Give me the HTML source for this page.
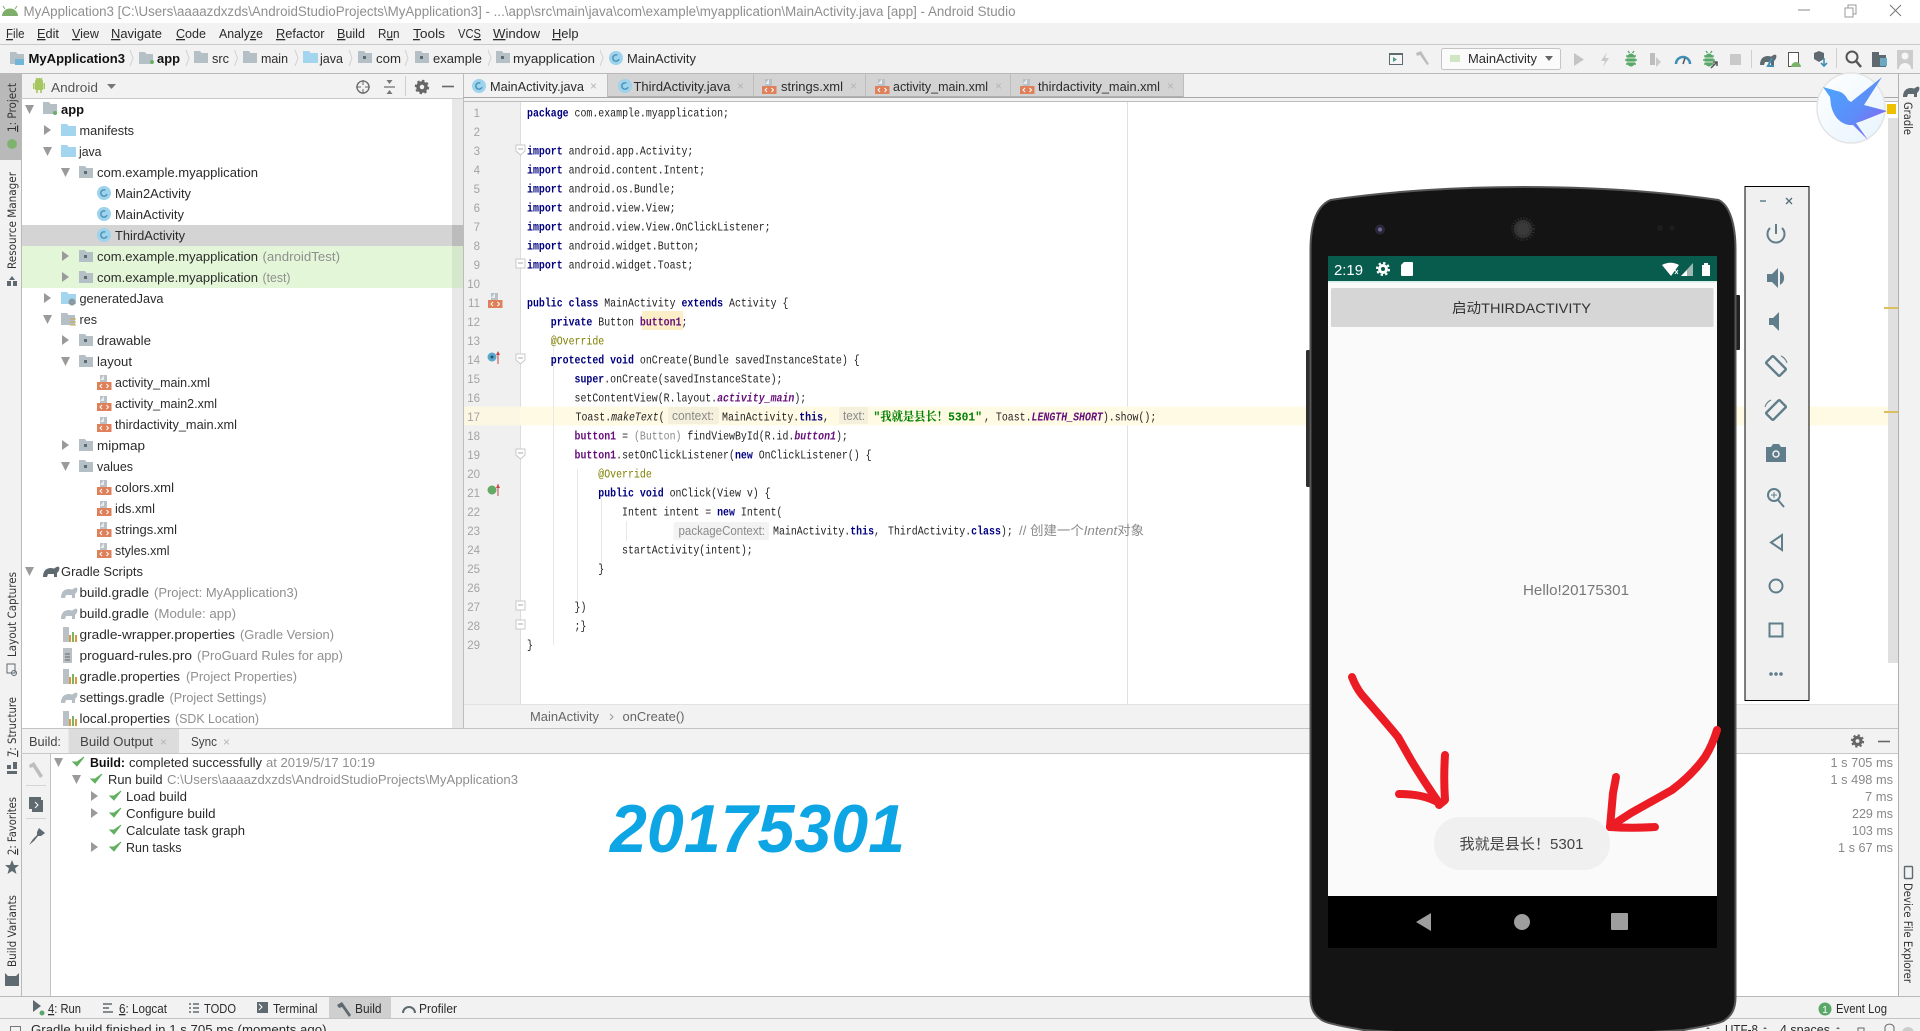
<!DOCTYPE html>
<html lang="en"><head><meta charset="utf-8"><title>Android Studio</title>
<style>
html,body{margin:0;padding:0;width:1920px;height:1031px;overflow:hidden;background:#fff}
svg{display:block}
text{font-family:"Liberation Sans","Noto Sans CJK SC",sans-serif;font-size:13px;fill:#2b2b2b;white-space:pre}
.g{fill:#8f8f8f}
.b{font-weight:bold;fill:#111}
.v{font-family:"DejaVu Sans",sans-serif;font-size:11.5px;fill:#333}
.c{font-family:"Liberation Mono","Noto Serif CJK SC",monospace;font-size:12px;fill:#222}
.k{font-weight:bold;fill:#000080}
.f{font-weight:bold;fill:#660e7a}
.fi{font-weight:bold;font-style:italic;fill:#660e7a}
.i{font-style:italic}
.a{fill:#808000}
.n{font-size:11.5px;fill:#a3a3a3;text-anchor:end}
.h{font-size:12.5px;fill:#8a8a8a}
.x{font-size:12px;fill:#b5b5b5}
.u{text-decoration:underline}
.t{font-size:12.5px;fill:#888;text-anchor:end}
</style></head><body>
<svg width="1920" height="1031" viewBox="0 0 1920 1031" xmlns="http://www.w3.org/2000/svg">
<defs>
<g id="fb"><path d="M0 1h6l1.5 2H15v10H0z" fill="#a3d5ee"/></g>
<g id="fg"><path d="M0 1h6l1.5 2H14v10H0z" fill="#b4c0c6"/></g>
<g id="fp"><path d="M0 1h6l1.5 2H14v10H0z" fill="#b4c0c6"/><rect x="5" y="6" width="3" height="3" fill="#5d6a70"/></g>
<g id="cl"><circle cx="7" cy="7" r="7" fill="#9dd3ec"/><circle cx="7" cy="7" r="3.2" fill="none" stroke="#4a8fb0" stroke-width="1.4" stroke-dasharray="15 5" transform="rotate(20 7 7)"/></g>
<g id="xm"><path d="M3 0h7v7H3z" fill="#b9c1c6"/><path d="M3 5l4-5v5z" fill="#e8ecee"/><rect x="0" y="7" width="14.5" height="8" fill="#e0805a"/><path d="M5 9l-2 2 2 2M9.5 9l2 2-2 2" fill="none" stroke="#fff" stroke-width="1"/></g>
<g id="el"><path d="M1 14c0-6 3-9 8-9 2 0 3 1 4 0 1-1 3-2 4-1 1 1 0 4-1 5l-1 1v4h-3v-3H6l-1 3z" fill="#5f6a70"/></g>
<g id="elg"><path d="M1 14c0-6 3-9 8-9 2 0 3 1 4 0 1-1 3-2 4-1 1 1 0 4-1 5l-1 1v4h-3v-3H6l-1 3z" fill="#b4bec4"/></g>
<g id="pr"><path d="M2 0h6v15H2z" fill="#b9c1c6"/><rect x="8" y="8" width="2" height="7" fill="#d99b3a"/><rect x="11" y="5" width="2" height="10" fill="#7ab26a"/><rect x="14" y="8" width="2" height="7" fill="#d99b3a"/></g>
<path id="ck" d="M0 5l4 4 7-9-7 5z" fill="#60b060" stroke="#60b060" stroke-width="1"/>
<path id="ad" d="M0 0h9L4.5 9z" fill="#9a9a9a"/>
<path id="ar" d="M0 0v10l7-5z" fill="#9a9a9a"/>
<g id="bug"><path d="M-5 -3h10M-6 1h12M-5 5h10M-3 -8l1.500 2M3 -8l-1.500 2" stroke="#59a869" stroke-width="1.400"/><ellipse cx="0" cy="1" rx="4.500" ry="6.500" fill="#59a869"/><path d="M-4 -1h8M-4 3h8" stroke="#fff" stroke-width=".8"/></g>
<linearGradient id="bg" x1="0" y1="0" x2="1" y2="1"><stop offset="0" stop-color="#fff"/><stop offset="1" stop-color="#e6f4fd"/></linearGradient>
<linearGradient id="bd" x1="0" y1="0" x2="1" y2="1"><stop offset="0" stop-color="#4aa8ff"/><stop offset=".55" stop-color="#5d8df8"/><stop offset="1" stop-color="#9a55ec"/></linearGradient>
</defs>

<!-- title bar -->
<rect width="1920" height="1031" fill="#f2f2f2"/>
<rect width="1920" height="23" fill="#fff"/>
<path d="M2 16a8 7.500 0 0 1 16 0z" fill="#7fae6a"/><path d="M5 9l-2-3M15 9l2-3" stroke="#7fae6a" stroke-width="1"/>
<text class="g" x="23.5" y="16" textLength="992" lengthAdjust="spacingAndGlyphs" style="font-size:13.5px">MyApplication3 [C:\Users\aaaazdxzds\AndroidStudioProjects\MyApplication3] - ...\app\src\main\java\com\example\myapplication\MainActivity.java [app] - Android Studio</text>
<path d="M1798 10h12" stroke="#8a8a8a"/><path d="M1845 8h8v9h-8zM1848 8V5h8v9h-3" fill="none" stroke="#9a9a9a"/><path d="M1890 5l11 11M1901 5l-11 11" stroke="#777" stroke-width="1"/>

<!-- menu -->
<g transform="translate(0,-1)">
<text x="6" y="39" textLength="18.5" lengthAdjust="spacingAndGlyphs"><tspan class="u">F</tspan>ile</text>
<text x="37" y="39" textLength="22" lengthAdjust="spacingAndGlyphs"><tspan class="u">E</tspan>dit</text>
<text x="72" y="39" textLength="27" lengthAdjust="spacingAndGlyphs"><tspan class="u">V</tspan>iew</text>
<text x="111" y="39" textLength="51" lengthAdjust="spacingAndGlyphs"><tspan class="u">N</tspan>avigate</text>
<text x="176" y="39" textLength="30" lengthAdjust="spacingAndGlyphs"><tspan class="u">C</tspan>ode</text>
<text x="219" y="39" textLength="44" lengthAdjust="spacingAndGlyphs">Analy<tspan class="u">z</tspan>e</text>
<text x="276" y="39" textLength="48.5" lengthAdjust="spacingAndGlyphs"><tspan class="u">R</tspan>efactor</text>
<text x="337" y="39" textLength="28" lengthAdjust="spacingAndGlyphs"><tspan class="u">B</tspan>uild</text>
<text x="378" y="39" textLength="21.5" lengthAdjust="spacingAndGlyphs">R<tspan class="u">u</tspan>n</text>
<text x="413" y="39" textLength="32" lengthAdjust="spacingAndGlyphs"><tspan class="u">T</tspan>ools</text>
<text x="458" y="39" textLength="23" lengthAdjust="spacingAndGlyphs">VC<tspan class="u">S</tspan></text>
<text x="493" y="39" textLength="47" lengthAdjust="spacingAndGlyphs"><tspan class="u">W</tspan>indow</text>
<text x="552" y="39" textLength="26.5" lengthAdjust="spacingAndGlyphs"><tspan class="u">H</tspan>elp</text>
</g>
<path d="M0 44.5h1920" stroke="#c9c9c9"/>

<!-- nav bar -->
<g transform="translate(0,-1)">
<use href="#fg" x="10" y="52"/><rect x="15" y="60" width="9" height="6" fill="#6fb6d8"/>
<text class="b" x="28.5" y="64" textLength="96.5" lengthAdjust="spacingAndGlyphs">MyApplication3</text>
<use href="#fg" x="139" y="52"/><circle cx="152" cy="63" r="2" fill="#6aaf6a"/>
<text class="b" x="157" y="64" textLength="23" lengthAdjust="spacingAndGlyphs">app</text>
<use href="#fg" x="194" y="51"/><text x="212" y="64" textLength="17" lengthAdjust="spacingAndGlyphs">src</text>
<use href="#fg" x="243" y="51"/><text x="261" y="64" textLength="27" lengthAdjust="spacingAndGlyphs">main</text>
<use href="#fb" x="303" y="51"/><text x="320" y="64" textLength="23" lengthAdjust="spacingAndGlyphs">java</text>
<use href="#fp" x="358" y="51"/><text x="376" y="64" textLength="25" lengthAdjust="spacingAndGlyphs">com</text>
<use href="#fp" x="415" y="51"/><text x="433" y="64" textLength="49" lengthAdjust="spacingAndGlyphs">example</text>
<use href="#fp" x="496" y="51"/><text x="513" y="64" textLength="82" lengthAdjust="spacingAndGlyphs">myapplication</text>
<use href="#cl" x="609" y="52"/><text x="627" y="64" textLength="69" lengthAdjust="spacingAndGlyphs">MainActivity</text>
<path d="M130 51l3 8-3 8M186 51l3 8-3 8M234.5 51l3 8-3 8M295 51l3 8-3 8M349 51l3 8-3 8M405 51l3 8-3 8M488 51l3 8-3 8M600 51l3 8-3 8" fill="none" stroke="#d0d0d0"/>
</g>

<!-- right toolbar -->
<rect x="1389.5" y="53.5" width="13" height="11" fill="#f6f6f6" stroke="#5d6a70"/><path d="M1393 57v5l4-2.5z" fill="#4f9a8f"/><rect x="1390" y="53" width="13" height="2" fill="#5d6a70"/>
<path d="M1416 53l5-2 8 13-2 1-7-10-3 1z" fill="#bdbdbd"/>
<rect x="1441.5" y="48.5" width="119" height="21" rx="2" fill="#fbfbfb" stroke="#c4c4c4"/>
<rect x="1450" y="55" width="10" height="7" fill="#cfe6c4"/>
<text x="1468" y="63" textLength="69" lengthAdjust="spacingAndGlyphs">MainActivity</text>
<path d="M1545 56h8l-4 5z" fill="#666"/>
<path d="M1574 53v13l10-6.5z" fill="#c4c4c4"/><path d="M1607 52l-6 9h4l-2 6 6-9h-4z" fill="#c9c9c9"/>
<use href="#bug" x="1631" y="59"/>
<path d="M1650 53h5v12h-5z" fill="#bdbdbd"/><path d="M1656 57v10l5-5z" fill="#c9c9c9"/>
<path d="M1676 64a7 7 0 0 1 14 0" fill="none" stroke="#3d8fb5" stroke-width="2.5"/><path d="M1683 64l2-6" stroke="#555" stroke-width="1.5"/>
<use href="#bug" x="1709" y="59"/><path d="M1711 68l6-6m-4 0h4v4" fill="none" stroke="#555" stroke-width="1.5"/>
<rect x="1730" y="54" width="11" height="11" fill="#c9c9c9"/><path d="M1751.5 50v18" stroke="#cfcfcf"/>
<use href="#el" x="1759" y="51"/><path d="M1772 58l-4 8h6" fill="none" stroke="#3d8fb5" stroke-width="2"/>
<rect x="1788.5" y="52.5" width="10" height="14" fill="#fff" stroke="#555"/><path d="M1791 67a5 5 0 0 1 10 0z" fill="#7ab26a"/>
<path d="M1814 53l5-2 5 2v6l-5 3-5-3z" fill="#5f6a70"/><path d="M1824 58v8m-3-3l3 3 3-3" fill="none" stroke="#3d8fb5" stroke-width="1.6"/>
<path d="M1836.5 48v20" stroke="#cfcfcf"/>
<circle cx="1852" cy="57" r="5.5" fill="none" stroke="#555" stroke-width="2"/><path d="M1856 61l5 6" stroke="#555" stroke-width="2.5"/>
<path d="M1872 52h7v3h7v12h-14z" fill="#5f6a70"/><rect x="1880" y="58" width="7" height="8" fill="#6aa8c4"/>
<rect x="1897" y="50" width="16" height="19" fill="#ccc"/><circle cx="1905" cy="56" r="3.5" fill="#f6f6f6"/><path d="M1899 69a6 6 0 0 1 12 0z" fill="#f6f6f6"/>
<path d="M0 73.5h1920" stroke="#b9b9b9"/>

<!-- left strip -->
<rect x="0" y="74" width="21" height="86" fill="#b9b9b9"/>
<path d="M21.5 74v923" stroke="#b9b9b9"/>
<text class="v" transform="translate(16,132) rotate(-90)" textLength="49" lengthAdjust="spacingAndGlyphs"><tspan class="u">1</tspan>: Project</text>
<circle cx="12" cy="144" r="5" fill="#7fb26f"/>
<text class="v" transform="translate(16,269) rotate(-90)" textLength="97" lengthAdjust="spacingAndGlyphs">Resource Manager</text>
<path d="M12 276l3 4H9zM7 281h4v5H7zM13 281h4v5h-4z" fill="#5f6a70"/>
<text class="v" transform="translate(16,657) rotate(-90)" textLength="85" lengthAdjust="spacingAndGlyphs">Layout Captures</text>
<rect x="7" y="664" width="8" height="9" fill="none" stroke="#5f6a70"/><circle cx="14" cy="673" r="2.5" fill="none" stroke="#5f6a70"/>
<text class="v" transform="translate(16,757) rotate(-90)" textLength="60" lengthAdjust="spacingAndGlyphs"><tspan class="u">7</tspan>: Structure</text>
<path d="M7 765h4v4H7zM13 762h4v7h-4zM7 771h10v3H7z" fill="#5f6a70"/>
<text class="v" transform="translate(16,855) rotate(-90)" textLength="58" lengthAdjust="spacingAndGlyphs"><tspan class="u">2</tspan>: Favorites</text>
<path d="M12 860l2 5h5l-4 3.5 1.5 5.5-4.5-3-4.5 3 1.5-5.5-4-3.5h5z" fill="#5f6a70"/>
<text class="v" transform="translate(16,967) rotate(-90)" textLength="72" lengthAdjust="spacingAndGlyphs">Build Variants</text>
<path d="M5 973l3 3h8l3-3v13H5z" fill="#5f6a70"/>

<!-- project header -->
<path d="M35 82a4 4 0 0 1 8 0v8h-8z" fill="#a6c660"/><rect x="33" y="83" width="1.5" height="6" fill="#a6c660"/><rect x="43.5" y="83" width="1.5" height="6" fill="#a6c660"/><path d="M37 90v3M41 90v3" stroke="#a6c660" stroke-width="1.6"/><path d="M36 78l1 2M42 78l-1 2" stroke="#a6c660"/>
<text x="51" y="92" textLength="47" lengthAdjust="spacingAndGlyphs" style="fill:#555">Android</text>
<path d="M107 84h9l-4.5 5z" fill="#777"/>
<circle cx="363" cy="87" r="6" fill="none" stroke="#666" stroke-width="1.3"/><path d="M363 80v14M356 87h14" stroke="#666"/><circle cx="363" cy="87" r="2" fill="#f2f2f2"/>
<path d="M384 87h11" stroke="#777" stroke-width="1.3"/><path d="M389.5 84l-3-4h6zM389.5 90l-3 4h6z" fill="#777"/>
<path d="M405.5 76v20" stroke="#cfcfcf"/>
<circle cx="422" cy="87" r="4" fill="none" stroke="#666" stroke-width="3.5"/><circle cx="422" cy="87" r="6.3" fill="none" stroke="#666" stroke-width="1.8" stroke-dasharray="2.5 2.4"/>
<path d="M442 86.5h12" stroke="#666" stroke-width="1.6"/>
<path d="M21 98.5h442" stroke="#c9c9c9"/>

<!-- tree -->
<rect x="22" y="99" width="441" height="629" fill="#fff"/>
<rect x="452" y="99" width="11" height="629" fill="#e8e8e8"/>
<rect x="22" y="225" width="430" height="21" fill="#d4d4d4"/><rect x="452" y="225" width="11" height="21" fill="#bcbcbc"/>
<rect x="22" y="246" width="430" height="42" fill="#e4f6d8"/><rect x="452" y="246" width="11" height="42" fill="#d6e8cb"/>
<g transform="translate(0,-1)">
<use href="#ad" x="25" y="106"/><use href="#fg" x="43" y="102"/><circle cx="55" cy="114" r="2" fill="#6aaf6a"/><text class="b" x="61" y="115" textLength="23" lengthAdjust="spacingAndGlyphs">app</text>
<use href="#ar" x="44" y="126"/><use href="#fb" x="61" y="124"/><text x="79.5" y="136" textLength="54.5" lengthAdjust="spacingAndGlyphs">manifests</text>
<use href="#ad" x="43" y="148"/><use href="#fb" x="61" y="145"/><text x="79" y="157" textLength="22.5" lengthAdjust="spacingAndGlyphs">java</text>
<use href="#ad" x="61" y="169"/><use href="#fp" x="79" y="166"/><text x="97" y="178" textLength="161" lengthAdjust="spacingAndGlyphs">com.example.myapplication</text>
<use href="#cl" x="97" y="187"/><text x="115" y="199" textLength="76" lengthAdjust="spacingAndGlyphs">Main2Activity</text>
<use href="#cl" x="97" y="208"/><text x="115" y="220" textLength="69" lengthAdjust="spacingAndGlyphs">MainActivity</text>
<use href="#cl" x="97" y="229"/><text x="115" y="241" textLength="70" lengthAdjust="spacingAndGlyphs">ThirdActivity</text>
<use href="#ar" x="62" y="252"/><use href="#fp" x="79" y="250"/><text x="97" y="262" textLength="161" lengthAdjust="spacingAndGlyphs">com.example.myapplication</text><text class="g" x="262.5" y="262" textLength="77.5" lengthAdjust="spacingAndGlyphs">(androidTest)</text>
<use href="#ar" x="62" y="273"/><use href="#fp" x="79" y="271"/><text x="97" y="283" textLength="161" lengthAdjust="spacingAndGlyphs">com.example.myapplication</text><text class="g" x="262.5" y="283" textLength="28" lengthAdjust="spacingAndGlyphs">(test)</text>
<use href="#ar" x="44" y="294"/><use href="#fb" x="61" y="292"/><circle cx="72" cy="303" r="3.5" fill="#8a9aa0"/><text x="79.5" y="304" textLength="84" lengthAdjust="spacingAndGlyphs">generatedJava</text>
<use href="#ad" x="43" y="316"/><use href="#fg" x="61" y="313"/><path d="M70 320h6M70 323h6M70 326h6" stroke="#c7a84a"/><text x="79.5" y="325" textLength="17.5" lengthAdjust="spacingAndGlyphs">res</text>
<use href="#ar" x="62" y="336"/><use href="#fp" x="79" y="334"/><text x="97" y="346" textLength="54" lengthAdjust="spacingAndGlyphs">drawable</text>
<use href="#ad" x="61" y="358"/><use href="#fp" x="79" y="355"/><text x="97" y="367" textLength="35" lengthAdjust="spacingAndGlyphs">layout</text>
<use href="#xm" x="97" y="376"/><text x="115" y="388" textLength="95" lengthAdjust="spacingAndGlyphs">activity_main.xml</text>
<use href="#xm" x="97" y="397"/><text x="115" y="409" textLength="102" lengthAdjust="spacingAndGlyphs">activity_main2.xml</text>
<use href="#xm" x="97" y="418"/><text x="115" y="430" textLength="122" lengthAdjust="spacingAndGlyphs">thirdactivity_main.xml</text>
<use href="#ar" x="62" y="441"/><use href="#fp" x="79" y="439"/><text x="97" y="451" textLength="48" lengthAdjust="spacingAndGlyphs">mipmap</text>
<use href="#ad" x="61" y="463"/><use href="#fp" x="79" y="460"/><text x="97" y="472" textLength="36" lengthAdjust="spacingAndGlyphs">values</text>
<use href="#xm" x="97" y="481"/><text x="115" y="493" textLength="59" lengthAdjust="spacingAndGlyphs">colors.xml</text>
<use href="#xm" x="97" y="502"/><text x="115" y="514" textLength="40" lengthAdjust="spacingAndGlyphs">ids.xml</text>
<use href="#xm" x="97" y="523"/><text x="115" y="535" textLength="62" lengthAdjust="spacingAndGlyphs">strings.xml</text>
<use href="#xm" x="97" y="544"/><text x="115" y="556" textLength="54.5" lengthAdjust="spacingAndGlyphs">styles.xml</text>
<use href="#ad" x="25" y="568"/><use href="#el" x="42" y="564"/><text x="61" y="577" textLength="82" lengthAdjust="spacingAndGlyphs">Gradle Scripts</text>
<use href="#elg" x="60" y="585"/><text x="79.5" y="598" textLength="69.5" lengthAdjust="spacingAndGlyphs">build.gradle</text><text class="g" x="154" y="598" textLength="144" lengthAdjust="spacingAndGlyphs">(Project: MyApplication3)</text>
<use href="#elg" x="60" y="606"/><text x="79.5" y="619" textLength="69.5" lengthAdjust="spacingAndGlyphs">build.gradle</text><text class="g" x="154" y="619" textLength="82" lengthAdjust="spacingAndGlyphs">(Module: app)</text>
<use href="#pr" x="61" y="628"/><text x="79.5" y="640" textLength="155.5" lengthAdjust="spacingAndGlyphs">gradle-wrapper.properties</text><text class="g" x="240" y="640" textLength="94" lengthAdjust="spacingAndGlyphs">(Gradle Version)</text>
<path d="M63 649h9v15h-9z" fill="#b9c1c6"/><path d="M65 655h5M65 658h5M65 661h5" stroke="#666"/><text x="79.5" y="661" textLength="112.5" lengthAdjust="spacingAndGlyphs">proguard-rules.pro</text><text class="g" x="197" y="661" textLength="146" lengthAdjust="spacingAndGlyphs">(ProGuard Rules for app)</text>
<use href="#pr" x="61" y="670"/><text x="79.5" y="682" textLength="100.5" lengthAdjust="spacingAndGlyphs">gradle.properties</text><text class="g" x="186" y="682" textLength="111" lengthAdjust="spacingAndGlyphs">(Project Properties)</text>
<use href="#elg" x="60" y="690"/><text x="79.5" y="703" textLength="85" lengthAdjust="spacingAndGlyphs">settings.gradle</text><text class="g" x="169.5" y="703" textLength="97" lengthAdjust="spacingAndGlyphs">(Project Settings)</text>
<use href="#pr" x="61" y="712"/><text x="79.5" y="724" textLength="90.5" lengthAdjust="spacingAndGlyphs">local.properties</text><text class="g" x="175" y="724" textLength="84" lengthAdjust="spacingAndGlyphs">(SDK Location)</text>
</g>

<!-- editor tabs -->
<rect x="463" y="74" width="1435" height="28" fill="#f2f2f2"/>
<rect x="608" y="74" width="575" height="23" fill="#d3d3d3"/>
<path d="M463.5 74v654M607.5 74v23M753.5 74v23M865.5 74v23M1010.5 74v23M1183.5 74v23" stroke="#bdbdbd"/>
<path d="M463 97.5H1898" stroke="#a8a8a8"/><path d="M608 96.5h575" stroke="#b0b0b0"/><path d="M463 101.500H1898" stroke="#bdbdbd"/>
<g transform="translate(0,-1)">
<use href="#cl" x="472" y="80"/><text x="490" y="92" textLength="94" lengthAdjust="spacingAndGlyphs">MainActivity.java</text><text class="x" x="590" y="91">×</text>
<use href="#cl" x="618" y="80"/><text x="633.5" y="92" textLength="97" lengthAdjust="spacingAndGlyphs">ThirdActivity.java</text><text class="x" x="737" y="91">×</text>
<use href="#xm" x="762" y="80"/><text x="781" y="92" textLength="62" lengthAdjust="spacingAndGlyphs">strings.xml</text><text class="x" x="850" y="91">×</text>
<use href="#xm" x="875" y="80"/><text x="893" y="92" textLength="95" lengthAdjust="spacingAndGlyphs">activity_main.xml</text><text class="x" x="995" y="91">×</text>
<use href="#xm" x="1020" y="80"/><text x="1038" y="92" textLength="122" lengthAdjust="spacingAndGlyphs">thirdactivity_main.xml</text><text class="x" x="1167" y="91">×</text>
</g>

<!-- editor -->
<rect x="520" y="102" width="1378" height="602" fill="#fff"/>
<rect x="464" y="102" width="56" height="602" fill="#f0f0f0"/>
<path d="M1127.5 102v602" stroke="#e0e0e0"/><path d="M520.5 102v602" stroke="#dcdcdc"/>
<rect x="464" y="406.500" width="56" height="19" fill="#fbf7e2"/><rect x="520" y="406.500" width="1378" height="19" fill="#fffae3"/>
<rect x="1888" y="118" width="10" height="545" fill="#e0e0e0"/>
<rect x="1887" y="104" width="9" height="10" fill="#eec100"/><rect x="1884" y="307" width="14" height="2" fill="#dcc060"/><rect x="1884" y="411" width="14" height="2" fill="#dcc060"/>
<g transform="translate(0,-1)">
<rect x="642" y="312" width="41" height="19" fill="#fcefc8"/>
<path d="M553.5 336v310M577.5 470v135M601.5 500v70M626.5 522v20" stroke="#e8e8e8"/>
<text class="n" x="480" y="118">1</text><text class="n" x="480" y="137">2</text><text class="n" x="480" y="156">3</text><text class="n" x="480" y="175">4</text><text class="n" x="480" y="194">5</text><text class="n" x="480" y="213">6</text><text class="n" x="480" y="232">7</text><text class="n" x="480" y="251">8</text><text class="n" x="480" y="270">9</text><text class="n" x="480" y="289">10</text><text class="n" x="480" y="308">11</text><text class="n" x="480" y="327">12</text><text class="n" x="480" y="346">13</text><text class="n" x="480" y="365">14</text><text class="n" x="480" y="384">15</text><text class="n" x="480" y="403">16</text><text class="n" x="480" y="422">17</text><text class="n" x="480" y="441">18</text><text class="n" x="480" y="460">19</text><text class="n" x="480" y="479">20</text><text class="n" x="480" y="498">21</text><text class="n" x="480" y="517">22</text><text class="n" x="480" y="536">23</text><text class="n" x="480" y="555">24</text><text class="n" x="480" y="574">25</text><text class="n" x="480" y="593">26</text><text class="n" x="480" y="612">27</text><text class="n" x="480" y="631">28</text><text class="n" x="480" y="650">29</text>
<g fill="#fff" stroke="#c8c8c8"><path d="M516 146h9v6l-4.5 4-4.5-4z"/><path d="M516 260h9v9h-9z"/><path d="M516 355h9v6l-4.5 4-4.5-4z"/><path d="M516 450h9v6l-4.5 4-4.5-4z"/><path d="M516 602h9v9h-9z"/><path d="M516 621h9v9h-9z"/></g>
<path d="M518 264h5M518 606h5M518 625h5M518 150h5M518 359h5M518 454h5" stroke="#aaa"/>
<use href="#xm" x="488" y="294"/>
<circle cx="492" cy="358" r="4.5" fill="#5aa7cc"/><circle cx="492" cy="358" r="1.5" fill="#24536a"/><path d="M498 365v-12" stroke="#c44"/><path d="M496 356l2-4 2 4z" fill="#c44"/>
<circle cx="492" cy="491" r="4.5" fill="#64a964"/><path d="M498 497v-12" stroke="#c44"/><path d="M496 489l2-4 2 4z" fill="#c44"/>

<text class="c" transform="translate(527,117.5) scale(.825,1)"><tspan class="k">package</tspan> com.example.myapplication;</text>
<text class="c" transform="translate(527,155.5) scale(.825,1)"><tspan class="k">import</tspan> android.app.Activity;</text>
<text class="c" transform="translate(527,174.5) scale(.825,1)"><tspan class="k">import</tspan> android.content.Intent;</text>
<text class="c" transform="translate(527,193.5) scale(.825,1)"><tspan class="k">import</tspan> android.os.Bundle;</text>
<text class="c" transform="translate(527,212.5) scale(.825,1)"><tspan class="k">import</tspan> android.view.View;</text>
<text class="c" transform="translate(527,231.5) scale(.825,1)"><tspan class="k">import</tspan> android.view.View.OnClickListener;</text>
<text class="c" transform="translate(527,250.5) scale(.825,1)"><tspan class="k">import</tspan> android.widget.Button;</text>
<text class="c" transform="translate(527,269.5) scale(.825,1)"><tspan class="k">import</tspan> android.widget.Toast;</text>
<text class="c" transform="translate(527,307.5) scale(.825,1)"><tspan class="k">public class</tspan> MainActivity <tspan class="k">extends</tspan> Activity {</text>
<text class="c" transform="translate(527,326.5) scale(.825,1)">    <tspan class="k">private</tspan> Button <tspan class="f">button1</tspan>;</text>
<text class="c a" transform="translate(527,345.5) scale(.825,1)" style="fill:#808000">    @Override</text>
<text class="c" transform="translate(527,364.5) scale(.825,1)">    <tspan class="k">protected void</tspan> onCreate(Bundle savedInstanceState) {</text>
<text class="c" transform="translate(527,383.5) scale(.825,1)">        <tspan class="k">super</tspan>.onCreate(savedInstanceState);</text>
<text class="c" transform="translate(527,402.5) scale(.825,1)">        setContentView(R.layout.<tspan class="fi">activity_main</tspan>);</text>
<text class="c" transform="translate(575.5,421.5) scale(.825,1)">Toast.<tspan class="i">makeText</tspan>(</text>
<rect x="668" y="408" width="51" height="17" rx="2" fill="#f4f0dc"/><text class="h" x="672" y="421" textLength="42" lengthAdjust="spacingAndGlyphs">context:</text>
<text class="c" transform="translate(722,421.5) scale(.825,1)">MainActivity.<tspan class="k">this</tspan>,</text>
<rect x="839" y="408" width="29" height="17" rx="2" fill="#f4f0dc"/><text class="h" x="843" y="421" textLength="22" lengthAdjust="spacingAndGlyphs">text:</text>
<text class="c" x="873.5" y="421.5" textLength="108.5" lengthAdjust="spacingAndGlyphs" style="font-weight:bold;fill:#008000">"我就是县长！5301"</text>
<text class="c" transform="translate(984,421.5) scale(.825,1)">, Toast.<tspan class="fi">LENGTH_SHORT</tspan>).show();</text>
<text class="c" transform="translate(527,440.5) scale(.825,1)">        <tspan class="f">button1</tspan> = <tspan fill="#8a8a8a">(Button)</tspan> findViewById(R.id.<tspan class="fi">button1</tspan>);</text>
<text class="c" transform="translate(527,459.5) scale(.825,1)">        <tspan class="f">button1</tspan>.setOnClickListener(<tspan class="k">new</tspan> OnClickListener() {</text>
<text class="c" transform="translate(527,478.5) scale(.825,1)" style="fill:#808000">            @Override</text>
<text class="c" transform="translate(527,497.5) scale(.825,1)">            <tspan class="k">public void</tspan> onClick(View v) {</text>
<text class="c" transform="translate(527,516.5) scale(.825,1)">                Intent intent = <tspan class="k">new</tspan> Intent(</text>
<rect x="673.5" y="523" width="95.5" height="18" rx="2" fill="#f3f3f3"/><text class="h" x="678.5" y="536" textLength="86.5" lengthAdjust="spacingAndGlyphs">packageContext:</text>
<text class="c" transform="translate(773,535.5) scale(.825,1)">MainActivity.<tspan class="k">this</tspan>,</text>
<text class="c" transform="translate(888,535.5) scale(.825,1)">ThirdActivity.<tspan class="k">class</tspan>);</text>
<text x="1019" y="536" style="fill:#8a8a8a;font-size:13px" textLength="125" lengthAdjust="spacingAndGlyphs">// 创建一个<tspan font-style="italic">Intent</tspan>对象</text>
<text class="c" transform="translate(527,554.5) scale(.825,1)">                startActivity(intent);</text>
<text class="c" transform="translate(527,573.5) scale(.825,1)">            }</text>
<text class="c" transform="translate(527,611.5) scale(.825,1)">        })</text>
<text class="c" transform="translate(527,630.5) scale(.825,1)">        ;}</text>
<text class="c" transform="translate(527,649.5) scale(.825,1)">}</text>
</g>

<!-- breadcrumb -->
<rect x="464" y="704" width="1434" height="24" fill="#f2f2f2"/><path d="M464 704.5h1434" stroke="#e2e2e2"/>
<text x="530" y="721" textLength="69" lengthAdjust="spacingAndGlyphs" style="fill:#666">MainActivity</text>
<path d="M610 714l3 3-3 3" fill="none" stroke="#999"/>
<text x="622.5" y="721" textLength="62" lengthAdjust="spacingAndGlyphs" style="fill:#666">onCreate()</text>
<path d="M21 728.5h1877" stroke="#c4c4c4"/>

<!-- build panel -->
<rect x="68.5" y="729" width="110.5" height="24" fill="#dcdcdc"/>
<text x="29" y="746" textLength="32" lengthAdjust="spacingAndGlyphs" style="fill:#444">Build:</text>
<text x="80" y="746" textLength="73" lengthAdjust="spacingAndGlyphs" style="fill:#444">Build Output</text><text class="x" x="160" y="746">×</text>
<text x="191" y="746" textLength="26" lengthAdjust="spacingAndGlyphs" style="fill:#444">Sync</text><text class="x" x="223" y="746">×</text>
<circle cx="1857.5" cy="741" r="3.5" fill="none" stroke="#666" stroke-width="3.2"/><circle cx="1857.5" cy="741" r="5.8" fill="none" stroke="#666" stroke-width="1.7" stroke-dasharray="2.3 2.25"/>
<path d="M1878 741.5h12" stroke="#666" stroke-width="1.6"/>
<path d="M21 753.5h1877" stroke="#c8c8c8"/>
<rect x="51" y="754" width="1847" height="242" fill="#fff"/>
<rect x="22" y="754" width="28" height="242" fill="#f2f2f2"/>
<path d="M50.5 754v242" stroke="#c4c4c4"/><path d="M26 785.5h20M26 818.5h20" stroke="#d4d4d4"/>
<path d="M29 765l5-3 9 14-3 2-7-11-3 1z" fill="#bdbdbd"/>
<path d="M29 797h12v3h2v12H32v-3h-3z" fill="#5f6a70"/><path d="M35 802l3 3-3 3" fill="none" stroke="#fff"/>
<path d="M39 828l6 5-4 3-3 0-4 5-5 4 4-6 4-4 0-3z" fill="#5f6a70"/>
<g transform="translate(0,-1)">
<use href="#ad" x="54" y="759"/><use href="#ck" x="73" y="758"/>
<text class="b" x="90" y="768" textLength="35" lengthAdjust="spacingAndGlyphs">Build:</text><text x="129" y="768" textLength="133" lengthAdjust="spacingAndGlyphs">completed successfully</text><text class="g" x="266" y="768" textLength="109" lengthAdjust="spacingAndGlyphs">at 2019/5/17 10:19</text>
<use href="#ad" x="72" y="776"/><use href="#ck" x="91" y="775"/>
<text x="108" y="785" textLength="54.5" lengthAdjust="spacingAndGlyphs">Run build</text><text class="g" x="167" y="785" textLength="351" lengthAdjust="spacingAndGlyphs">C:\Users\aaaazdxzds\AndroidStudioProjects\MyApplication3</text>
<use href="#ar" x="91" y="792"/><use href="#ck" x="110" y="792"/><text x="126" y="802" textLength="61" lengthAdjust="spacingAndGlyphs">Load build</text>
<use href="#ar" x="91" y="809"/><use href="#ck" x="110" y="809"/><text x="126" y="819" textLength="89.5" lengthAdjust="spacingAndGlyphs">Configure build</text>
<use href="#ck" x="110" y="826"/><text x="126" y="836" textLength="119" lengthAdjust="spacingAndGlyphs">Calculate task graph</text>
<use href="#ar" x="91" y="843"/><use href="#ck" x="110" y="843"/><text x="126" y="853" textLength="55.5" lengthAdjust="spacingAndGlyphs">Run tasks</text>
<text class="t" x="1893" y="768" textLength="62.5" lengthAdjust="spacingAndGlyphs">1 s 705 ms</text>
<text class="t" x="1893" y="785" textLength="62.5" lengthAdjust="spacingAndGlyphs">1 s 498 ms</text>
<text class="t" x="1893" y="802" textLength="28" lengthAdjust="spacingAndGlyphs">7 ms</text>
<text class="t" x="1893" y="819" textLength="41" lengthAdjust="spacingAndGlyphs">229 ms</text>
<text class="t" x="1893" y="836" textLength="41" lengthAdjust="spacingAndGlyphs">103 ms</text>
<text class="t" x="1893" y="853" textLength="55" lengthAdjust="spacingAndGlyphs">1 s 67 ms</text>
</g>
<text x="610" y="852" textLength="295" lengthAdjust="spacingAndGlyphs" style="font-size:68px;font-weight:bold;font-style:italic;fill:#0ea5e4">20175301</text>

<!-- bottom tools -->
<path d="M0 996.5h1898M1898 996.5h22" stroke="#b9b9b9"/><path d="M0 1018.5h1920" stroke="#c4c4c4"/>
<rect x="329" y="997" width="62" height="21" fill="#cfcfcf"/>
<path d="M33 1000v12l8-6z" fill="#5f6a70"/><circle cx="42" cy="1013" r="2.5" fill="#59a869"/>
<text x="48" y="1013" textLength="33" lengthAdjust="spacingAndGlyphs"><tspan class="u">4</tspan>: Run</text>
<path d="M103 1004h9M103 1008h6M103 1012h10" stroke="#5f6a70" stroke-width="1.4"/>
<text x="119" y="1013" textLength="48" lengthAdjust="spacingAndGlyphs"><tspan class="u">6</tspan>: Logcat</text>
<path d="M189 1004h2M193 1004h6M189 1008h2M193 1008h6M189 1012h2M193 1012h6" stroke="#5f6a70" stroke-width="1.4"/>
<text x="204" y="1013" textLength="32" lengthAdjust="spacingAndGlyphs">TODO</text>
<rect x="257" y="1002" width="11" height="11" fill="#5f6a70"/><path d="M259 1004l3 3-3 3" fill="none" stroke="#fff"/>
<text x="273" y="1013" textLength="44.5" lengthAdjust="spacingAndGlyphs">Terminal</text>
<path d="M337 1005l5-3 9 13-2 2-7-10-3 1z" fill="#5f6a70"/>
<text x="355" y="1013" textLength="26.5" lengthAdjust="spacingAndGlyphs">Build</text>
<path d="M403 1013a6 6 0 0 1 12 0" fill="none" stroke="#5f6a70" stroke-width="2"/>
<text x="419" y="1013" textLength="38" lengthAdjust="spacingAndGlyphs">Profiler</text>
<circle cx="1825" cy="1009" r="6.5" fill="#59a869"/><text x="1825" y="1013" text-anchor="middle" style="font-size:10px;fill:#fff">1</text>
<text x="1836" y="1013" textLength="51" lengthAdjust="spacingAndGlyphs">Event Log</text>
<rect x="10.5" y="1026.5" width="10" height="10" fill="none" stroke="#777"/>
<text x="31" y="1034" textLength="295.5" lengthAdjust="spacingAndGlyphs">Gradle build finished in 1 s 705 ms (moments ago)</text>
<text x="1725" y="1034" textLength="33" lengthAdjust="spacingAndGlyphs">UTF-8</text><text x="1780" y="1034" textLength="50" lengthAdjust="spacingAndGlyphs">4 spaces</text>
<path d="M1708 1027l2 2h-4zM1765 1027l2 2h-4zM1838 1027l2 2h-4z" fill="#666"/>
<path d="M1858 1028h6v6h-6zM1885 1027a5 5 0 0 1 9 0v7h-9z" fill="none" stroke="#666"/><circle cx="1908" cy="1033" r="6" fill="#ccc"/>

<!-- right strip -->
<path d="M1898.5 74v922" stroke="#b0b0b0"/>
<path d="M1899 74h21v922h-21z" fill="#f2f2f2"/>
<use href="#el" x="1902" y="83"/>
<text class="v" transform="translate(1904,102) rotate(90)" textLength="33" lengthAdjust="spacingAndGlyphs">Gradle</text>
<rect x="1904.5" y="866.5" width="8" height="12" rx="1" fill="none" stroke="#5f6a70" stroke-width="1.4"/>
<text class="v" transform="translate(1904,883) rotate(90)" textLength="100" lengthAdjust="spacingAndGlyphs">Device File Explorer</text>

<!-- bird -->
<ellipse cx="1851" cy="108" rx="34" ry="35" fill="url(#bg)" stroke="#e4e4e6" stroke-width="1.5"/>
<path d="M1823 87l14 4c6 1 9 5 11 9l3 2 31-25-18 28 23 6-25 10-6 2 12 17-15-15c-12 1-20-9-22-20l-1-8z" fill="url(#bd)"/>

<!-- phone side buttons -->
<rect x="1306" y="350" width="5" height="137" rx="1.5" fill="#2e2e2e"/>
<rect x="1735" y="295" width="5" height="55" rx="1" fill="#222"/>
<!-- phone -->
<path d="M1310.5 250c0-26 6-44 20-50 60-9 130-13 193-13s133 4 195 13c11 5 17 24 17 50v747c0 12-4 19-12 24-8 4-30 7-40 9-50 3-110 8-160 8s-110-5-160-8c-10-2-32-5-40-9-9-5-13-12-13-24z" fill="#141414" stroke="#555" stroke-width="2"/>
<circle cx="1380" cy="229.5" r="5" fill="#2a2838"/><circle cx="1380" cy="229.5" r="2" fill="#6c6898"/>
<circle cx="1523" cy="229" r="9" fill="#3a3a3a"/><circle cx="1523" cy="229" r="9" fill="none" stroke="#2a2a2a" stroke-width="6" stroke-dasharray="1 1.5"/>
<circle cx="1660" cy="228" r="3" fill="#1e1e1e"/><circle cx="1672" cy="228" r="2.5" fill="#1e1e1e"/>
<rect x="1328" y="256" width="389" height="640" fill="#fafafa"/>
<rect x="1328" y="256" width="389" height="25" fill="#075c4e"/><rect x="1328" y="281" width="389" height="1.5" fill="#d6ece6"/>
<text x="1334" y="275" textLength="29" lengthAdjust="spacingAndGlyphs" style="font-size:15px;fill:#fff">2:19</text>
<circle cx="1383" cy="269" r="3.5" fill="none" stroke="#fff" stroke-width="3"/><circle cx="1383" cy="269" r="6" fill="none" stroke="#fff" stroke-width="2" stroke-dasharray="2.4 2.3"/>
<path d="M1404 262h8a1 1 0 0 1 1 1v12a1 1 0 0 1-1 1h-10a1 1 0 0 1-1-1v-10z" fill="#fff"/>
<path d="M1662 265c5-3 12-3 17 0l-8 11z" fill="#fff"/><path d="M1675 270l3 4m0-4l-3 4" stroke="#fff" stroke-width="1"/>
<path d="M1693 263v13h-12z" fill="#9fb8b2"/><path d="M1687 270v6h-6z" fill="#fff"/>
<path d="M1702 265h2v-2h4v2h2v11h-8z" fill="#fff"/>
<rect x="1331" y="288" width="382.5" height="39" rx="1.5" fill="#d6d6d6"/>
<text x="1452" y="313" textLength="139" lengthAdjust="spacingAndGlyphs" style="font-size:14px;fill:#333">启动THIRDACTIVITY</text>
<text x="1523" y="595" textLength="106" lengthAdjust="spacingAndGlyphs" style="font-size:15px;fill:#777">Hello!20175301</text>
<rect x="1434" y="817" width="176" height="53" rx="26" fill="#f0f0f0"/>
<text x="1459.5" y="849" textLength="124" lengthAdjust="spacingAndGlyphs" style="font-size:15px;fill:#444">我就是县长！5301</text>
<rect x="1328" y="896" width="389" height="52" fill="#000"/>
<path d="M1431 913v18l-15-9z" fill="#9e9e9e"/><ellipse cx="1522" cy="922" rx="8" ry="8" fill="#9e9e9e"/><rect x="1611" y="913" width="17" height="17" rx="1" fill="#9e9e9e"/>

<!-- red arrows -->
<g fill="none" stroke="#ec1c24" stroke-width="8" stroke-linecap="round" stroke-linejoin="round">
<path d="M1352 677c3 8 6 13 10 18 14 16 26 30 36 42 5 9 9 16 13 23 9 15 19 30 28 43"/>
<path d="M1445 755c-1 15-1 30 0 45l-6 5"/>
<path d="M1399 794c15 0 28 2 40 9"/>
<path d="M1717 730c-3 10-7 19-12 27-10 14-21 24-33 33-14 8-27 15-41 23-8 5-14 9-21 14"/>
<path d="M1616 777c-1 6-2 11-3 16-1 12-2 23-3 34"/>
<path d="M1610 827c15 1 30 1 45 0"/>
</g>

<!-- emulator sidebar -->
<rect x="1745" y="186.5" width="64" height="514" fill="#f0f0f0" stroke="#000" stroke-width="1"/>
<path d="M1760 201h6" stroke="#607d8b" stroke-width="1.5"/><path d="M1786 198l6 6m0-6l-6 6" stroke="#546e7a" stroke-width="1.3"/>
<g fill="none" stroke="#607d8b" stroke-width="2">
<path d="M1770 228a8.500 8.500 0 1 0 12 0M1776 224v10"/>
<rect x="1771" y="356.500" width="10" height="19" rx="1" stroke-width="2.400" transform="rotate(-45 1776 366)"/>
<rect x="1771" y="400.500" width="10" height="19" rx="1" stroke-width="2.400" transform="rotate(45 1776 410)"/>
<path d="M1781 356a11 11 0 0 1 6 7M1765 407a11 11 0 0 1 6-7" stroke-width="1"/>
<circle cx="1774" cy="495" r="6"/><path d="M1778 500l6 7"/><path d="M1771 495h6M1774 492v6" stroke-width="1"/>
<path d="M1782 535v15l-11-7.500z"/><circle cx="1776" cy="586" r="6.500"/><rect x="1769.500" y="623.500" width="13" height="13"/>
</g>
<path d="M1767 274h5l6-6v20l-6-6h-5zM1780 271a8 8 0 0 1 0 14z" fill="#607d8b"/>
<path d="M1769 318h4l6-6v19l-6-6h-4z" fill="#607d8b"/>
<path d="M1766 447h5l2-3h6l2 3h5v15h-20z" fill="#607d8b"/><circle cx="1776" cy="454" r="3" fill="none" stroke="#f0f0f0" stroke-width="1.500"/>
<circle cx="1771" cy="674" r="1.800" fill="#607d8b"/><circle cx="1776" cy="674" r="1.800" fill="#607d8b"/><circle cx="1781" cy="674" r="1.800" fill="#607d8b"/>
</svg>
</body></html>
